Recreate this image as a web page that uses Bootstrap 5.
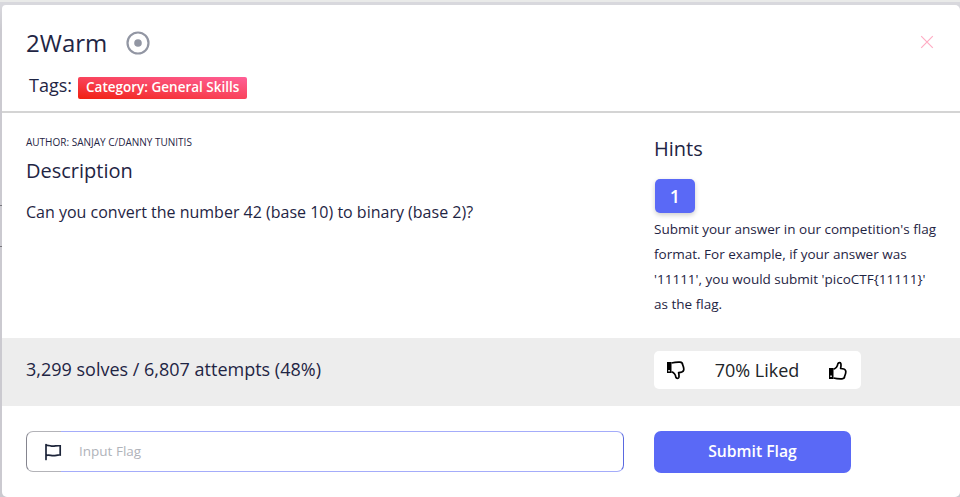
<!DOCTYPE html>
<html lang="en">
<head>
<meta charset="utf-8">
<meta name="viewport" content="width=device-width, initial-scale=1">
<title>2Warm</title>
<link href="https://cdn.jsdelivr.net/npm/bootstrap@5.3.0/dist/css/bootstrap.min.css" rel="stylesheet">
<style>
body{font-family:"Open Sans",sans-serif;color:#1f2544;height:497px;background:linear-gradient(#e9eae9 0 2px,#d8d8dd 2px 5px,#cbcad0 30px 205px,#77777d 205px 206px,#cbcad0 206px 246px,#77777d 246px 247px,#cbcad0 247px);padding:5px 0 0 2px}
.sheet{height:492px;border-radius:4px 5px 5px 5px}
.sheet-head{height:108px;padding:22px 26px 0 24px;border-bottom:2px solid #d4d4d4}
.title-text{font-size:24px;line-height:32px}
.ring{margin-left:19px}
.close-x{margin-top:8px}
.tags-line{font-size:18px;line-height:24px;margin:14px 0 0 3px}
.tag-pill{font-size:13.5px;line-height:21px;height:22px;padding:0 8px;margin:4px 0 0 6px;border-radius:2px;background:linear-gradient(to top right,#f0200f,#f9445c 50%,#ff5f97)}
.sheet-body{height:225px;padding:0 0 0 24px}
.main-col{width:628px}
.author{font-size:10px;line-height:14px;margin-top:22px}
.sub-title{font-size:20px;line-height:28px}
.hints-title{margin-top:22px}
.desc{font-size:16px;line-height:24px;margin-top:15px}
.hint-btn{width:40px;height:34px;font-size:18px;line-height:32px;background:#5a69f6;border-radius:5px;box-shadow:0 2px 5px #0003;margin:16px 0 4px 1px}
.hint-text{font-size:13.52px;line-height:25px}
.stats{height:68px;background:#ededed;padding-left:24px;font-size:18px}
.solves{margin-top:-5px}
.liked{width:207px;height:38px;border-radius:5px;padding:0 14px 0 13px;color:#212529;margin-top:-4px}
.sheet-foot{padding:25px 0 0 24px}
.flag-box{width:598px;height:41px}
.flag-icon{width:35px;border:1px solid #b3b3b8;border-left-color:#85858f;border-right:0;border-radius:7px 0 0 7px;padding-left:17px}
.flag-input{font-size:13.5px;border:1px solid #a4acfa;border-left:0;border-right-color:#5a69e0;border-radius:0 7px 7px 0;padding:0 0 0 18px;color:#1f2544}
.flag-input::placeholder{color:#b0b3ba;opacity:1}
.send{width:197px;height:42px;margin-left:30px;border-radius:7px;background:#5a69f6;font-size:15.7px;line-height:38px}
.send span{display:block;padding-bottom:3px}
</style>
<script src="https://cdn.jsdelivr.net/npm/bootstrap@5.3.0/dist/js/bootstrap.bundle.min.js"></script>
</head>
<body class="overflow-hidden">
<main class="sheet bg-white overflow-hidden">
  <header class="sheet-head">
    <div class="d-flex align-items-start">
      <h1 class="title-text fw-normal m-0">2Warm</h1>
      <svg class="ring mt-1" width="24" height="24" viewBox="0 0 24 24"><circle cx="12" cy="12" r="10.5" fill="none" stroke="#9296a3" stroke-width="2.2"/><circle cx="12" cy="12" r="3.8" fill="#9296a3"/></svg>
      <button class="close-x btn border-0 p-0 ms-auto d-flex" aria-label="Close"><svg width="14" height="14" viewBox="0 0 14 14" stroke="#ffadc4" stroke-width="1.2"><path d="M1.200 1.200l11.600 11.600M12.800 1.200L1.200 12.800"/></svg></button>
    </div>
    <div class="tags-line d-flex align-items-start"><span>Tags:</span><span class="tag-pill text-white fw-semibold">Category: General Skills</span></div>
  </header>
  <section class="sheet-body d-flex">
    <div class="main-col flex-shrink-0">
      <div class="author">AUTHOR: SANJAY C/DANNY TUNITIS</div>
      <h2 class="sub-title fw-normal mb-0 mt-2">Description</h2>
      <p class="desc mb-0">Can you convert the number 42 (base 10) to binary (base 2)?</p>
    </div>
    <div class="flex-grow-1">
      <h2 class="sub-title hints-title fw-normal mb-0">Hints</h2>
      <button class="hint-btn btn border-0 p-0 text-white fw-semibold">1</button>
      <p class="hint-text m-0">Submit your answer in our competition's flag<br>format. For example, if your answer was<br>'11111', you would submit 'picoCTF{11111}'<br>as the flag.</p>
    </div>
  </section>
  <section class="stats d-flex align-items-center">
    <div class="solves main-col flex-shrink-0">3,299 solves / 6,807 attempts (48%)</div>
    <div class="liked bg-white d-flex align-items-center justify-content-between">
      <svg width="18" height="19" viewBox="0 0 18 19" fill="none" stroke="#000" stroke-width="1.7" stroke-linejoin="round"><path d="M0 1h4.500v11H0z" fill="#000" stroke="none"/><path d="M1.300 9h1.500v1.500H1.300z" fill="#fff" stroke="none"/><path d="M4.500 2C7.500 1.300 10 1 13 1.200c2 .1 2.600 1 2.600 2.500.9 2 1.500 3.600 1.100 5.300-.4 1.800-1.700 2.500-5.100 2.500.5 2.300.6 3.500.2 5-.3 1-2.500 1.200-2.900-.2-.4-2.500-2-4.800-4.400-5.500"/></svg>
      <span>70% Liked</span>
      <svg width="18" height="19" viewBox="0 0 18 19" fill="none" stroke="#000" stroke-width="1.7" stroke-linejoin="round"><path d="M0 7h4.500v11H0z" fill="#000" stroke="none"/><path d="M1.300 14.500h1.500V16H1.300z" fill="#fff" stroke="none"/><path d="M4.500 17c3 .7 5.500 1 8.500.8 2-.1 2.600-1 2.600-2.500.9-2 1.500-3.600 1.100-5.300-.4-1.800-1.700-2.500-5.100-2.500.5-2.300.6-3.500.2-5-.3-1-2.500-1.200-2.900.2-.4 2.500-2 4.800-4.400 5.500"/></svg>
    </div>
  </section>
  <form class="sheet-foot d-flex align-items-start">
    <label class="flag-box d-flex">
      <span class="flag-icon d-flex align-items-center flex-shrink-0"><svg class="flex-shrink-0" width="18" height="18" viewBox="0 0 18 18" fill="none" stroke="#1c2439" stroke-width="1.7" stroke-linecap="round"><path d="M2 1.500v15M2 2.500c2.500-.8 4.500.8 7 .7s4-.7 7.200-.4V12c-2.800-.3-4.600.8-7.200.6s-4.500-1-7-.2"/></svg></span>
      <input class="flag-input bg-transparent flex-grow-1" type="text" placeholder="Input Flag">
    </label>
    <button class="send btn border-0 p-0 text-white fw-semibold" type="button"><span>Submit Flag</span></button>
  </form>
</main>
</body>
</html>
